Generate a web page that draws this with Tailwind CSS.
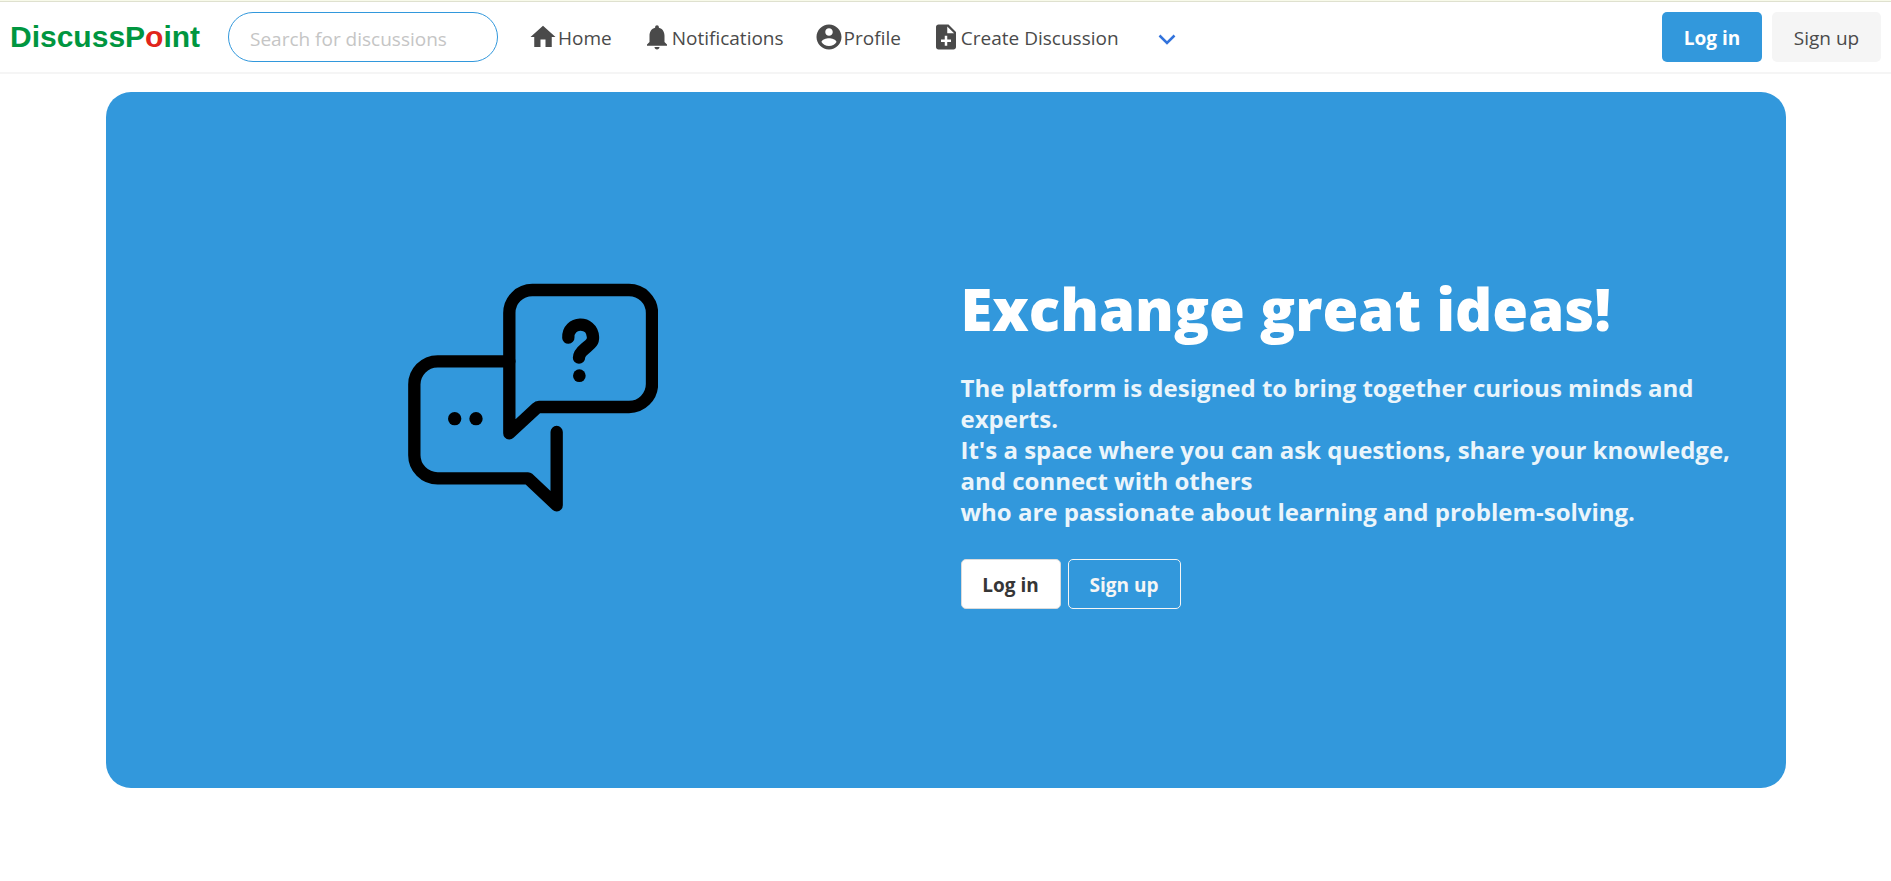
<!DOCTYPE html>
<html lang="en">
<head>
<meta charset="utf-8">
<meta name="viewport" content="width=device-width, initial-scale=1">
<title>DiscussPoint</title>
<script src="https://cdn.jsdelivr.net/npm/@tailwindcss/browser@4"></script>
</head>
<body class="bg-white font-['Segoe_UI','Open_Sans',sans-serif] text-[19px] leading-[30px] text-[#4a4a4a]">
<header class="border-t border-[#f8faea]">
  <nav aria-label="Main" class="flex min-h-[71px] items-center border-t border-[#dfe1cf] pl-[10px] pr-[10px] shadow-[0_2px_0_0_#f5f5f5]">
    <a href="#" class="w-[191px] font-['Liberation_Sans',sans-serif] text-[30px] leading-[40px] font-bold text-[#009640]">DiscussP<span class="text-[#e1251b]">o</span>int</a>
    <input type="search" aria-label="Search for discussions" placeholder="Search for discussions" class="ml-[27px] h-[50px] w-[270px] rounded-full border border-[#3298dc] bg-white px-[21px] pt-1 outline-none placeholder:text-[#c5c5c5]">
    <div class="ml-[15px] flex items-center">
      <a href="#" class="flex items-center px-[15px]">
        <svg class="size-[30px]" viewBox="0 0 24 24" fill="currentColor" aria-hidden="true"><path d="M10 20v-6h4v6h5v-8h3L12 3 2 12h3v8z"/></svg><span class="pt-0.5">Home</span></a>
      <a href="#" class="flex items-center px-[15px]">
        <svg class="size-[30px]" viewBox="0 0 24 24" fill="currentColor" aria-hidden="true"><path d="M12 22c1.1 0 2-.9 2-2h-4c0 1.1.89 2 2 2zm6-6v-5c0-3.07-1.64-5.64-4.5-6.32V4c0-.83-.67-1.5-1.5-1.5s-1.5.67-1.5 1.5v.68C7.63 5.36 6 7.92 6 11v5l-2 2v1h16v-1l-2-2z"/></svg><span class="pt-0.5">Notifications</span></a>
      <a href="#" class="flex items-center px-[15px]">
        <svg class="size-[30px]" viewBox="0 0 24 24" fill="currentColor" aria-hidden="true"><path d="M12 2C6.48 2 2 6.48 2 12s4.48 10 10 10 10-4.48 10-10S17.52 2 12 2zm0 3c1.66 0 3 1.34 3 3s-1.34 3-3 3-3-1.34-3-3 1.34-3 3-3zm0 14.2c-2.5 0-4.71-1.28-6-3.22.03-1.99 4-3.08 6-3.08 1.99 0 5.97 1.09 6 3.08-1.29 1.94-3.5 3.22-6 3.22z"/></svg><span class="pt-0.5">Profile</span></a>
      <a href="#" class="flex items-center px-[15px]">
        <svg class="size-[30px]" viewBox="0 0 24 24" fill="currentColor" aria-hidden="true"><path d="M14 2H6c-1.1 0-1.99.9-1.99 2L4 20c0 1.1.89 2 1.99 2H18c1.1 0 2-.9 2-2V8l-6-6zm2 14h-3v3h-2v-3H8v-2h3v-3h2v3h3v2zm-3-7V3.500L18.500 9H13z"/></svg><span class="pt-0.5">Create Discussion</span></a>
      <button type="button" aria-label="More" class="ml-6 flex h-[30px] w-[18px] items-center pt-1 text-[#3273dc]">
        <svg class="h-[11px] w-[18px]" viewBox="0 0 18 11" fill="none" stroke="currentColor" stroke-width="2.500" aria-hidden="true"><path d="M1.500 1.500 9 9 16.500 1.500"/></svg>
      </button>
    </div>
    <div class="ml-auto flex gap-[10px]">
      <button type="button" class="h-[50px] w-[100px] rounded-[5px] bg-[#3298dc] pt-0.5 font-bold text-white">Log in</button>
      <button type="button" class="h-[50px] w-[109px] rounded-[5px] bg-[#f5f5f5] pt-0.5">Sign up</button>
    </div>
  </nav>
</header>
<main class="mx-auto mt-5 grid min-h-[696px] max-w-[1680px] grid-cols-2 content-center rounded-[25px] bg-[#3298dc] px-[15px]">
  <div class="flex h-[252px] items-center justify-center">
    <svg class="h-[229px] w-[250px]" viewBox="54 37 750 687" fill="none" stroke="#000" stroke-width="37" stroke-linecap="round" stroke-linejoin="round" role="img" aria-label="Two speech bubbles">
      <path d="M358 488V127a69 69 0 0 1 69-69H717a69 69 0 0 1 69 69V340a69 69 0 0 1-69 69H447Q443 409 440 412Z"/>
      <path d="M358 272H143a70 70 0 0 0-70 72V552a70 70 0 0 0 70 71H414L500 704V484"/>
      <path d="M535 201c-2-50 71-53 74-2 1 16-9 22-22 33-12 10-20 19-20 29"/>
      <g fill="#000" stroke="none"><circle cx="568" cy="315" r="19"/><circle cx="194" cy="444" r="20"/><circle cx="258" cy="444" r="20"/></g>
    </svg>
  </div>
  <div class="px-[15px]">
    <h1 class="pt-1 text-[58px] leading-[66px] font-extrabold text-white">Exchange great ideas!</h1>
    <p class="mt-[30px] text-[24px] leading-[31px] font-bold text-[#ebf5fb]">The platform is designed to bring together curious minds and experts.<br>It's a space where you can ask questions, share your knowledge, and connect with others<br>who are passionate about learning and problem-solving.</p>
    <div class="mt-8 flex gap-[7px] font-bold">
      <button type="button" class="h-[50px] w-[100px] rounded-[5px] border border-[#dbdbdb] bg-white pt-0.5 text-[#363636]">Log in</button>
      <button type="button" class="h-[50px] w-[113px] rounded-[5px] border border-[#f5f5f5] pt-0.5 text-[#f5f5f5]">Sign up</button>
    </div>
  </div>
</main>
</body>
</html>
